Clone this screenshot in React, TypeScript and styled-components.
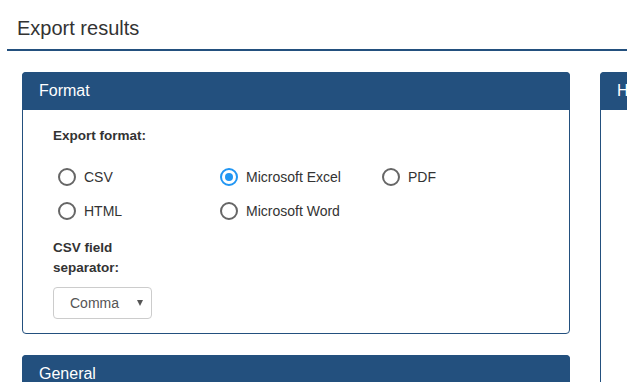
import React from "react";
import styled, { createGlobalStyle } from "styled-components";

const Global = createGlobalStyle`
  html, body { margin: 0; padding: 0; background: #fff; overflow: hidden; }
  body { font-family: "Liberation Sans", Arial, sans-serif; color: #333; width: 627px; height: 382px; }
`;

const Page = styled.div`
  width: 627px;
  height: 382px;
  overflow: hidden;
  padding-left: 7px;
  box-sizing: border-box;
`;

const TitleBar = styled.div`
  padding: 16px 0 0 10px;
  height: 33px;
  border-bottom: 2px solid #23507e;
`;

const Title = styled.h1`
  margin: 0;
  font-size: 20px;
  font-weight: normal;
  line-height: 24px;
  color: #333;
`;

const Columns = styled.div`
  display: grid;
  grid-template-columns: 548px 548px;
  column-gap: 30px;
  padding: 21px 0 0 15px;
`;

const Stack = styled.div`
  display: flex;
  flex-direction: column;
  gap: 21px;
`;

const Panel = styled.section<{ $tall?: boolean }>`
  border: 1px solid #23507e;
  border-radius: 4px;
  background: #fff;
  ${(p) => (p.$tall ? "height: 400px;" : "")}
`;

const PanelHeader = styled.div`
  background: #23507e;
  color: #fff;
  height: 38px;
  margin: -1px -1px 0 -1px;
  border-radius: 4px 4px 0 0;
  padding-left: 17px;
  display: flex;
  align-items: center;
  font-size: 16px;
`;

const PanelBody = styled.div`
  padding: 16px 30px 14px 30px;
`;

const FieldLabel = styled.div<{ $w?: number }>`
  font-weight: bold;
  font-size: 13.5px;
  line-height: 20px;
  color: #333;
  ${(p) => (p.$w ? `width: ${p.$w}px;` : "")}
`;

const RadioGrid = styled.div`
  display: grid;
  grid-template-columns: repeat(3, 162px);
  grid-auto-rows: 34px;
  margin-top: 14px;
  margin-bottom: 10px;
  padding-left: 5px;
`;

const RadioOption = styled.label`
  display: flex;
  align-items: center;
  gap: 8px;
  font-size: 14px;
  color: #333;
`;

const RadioCircle = styled.span<{ $checked?: boolean }>`
  width: 18px;
  height: 18px;
  box-sizing: border-box;
  border-radius: 50%;
  border: 2px solid ${(p) => (p.$checked ? "#2196f3" : "#666")};
  display: flex;
  align-items: center;
  justify-content: center;
  &::after {
    content: "";
    width: 8px;
    height: 8px;
    border-radius: 50%;
    background: ${(p) => (p.$checked ? "#2196f3" : "transparent")};
  }
`;

const Select = styled.div`
  margin-top: 9px;
  width: 99px;
  height: 32px;
  box-sizing: border-box;
  border: 1px solid #ccc;
  border-radius: 4px;
  display: flex;
  align-items: center;
  padding: 0 8px 0 16px;
  justify-content: space-between;
  font-size: 14px;
  color: #555;
`;

const Caret = styled.span`
  width: 0;
  height: 0;
  border-left: 3px solid transparent;
  border-right: 3px solid transparent;
  border-top: 6px solid #555;
`;

const options = [
  { label: "CSV", checked: false },
  { label: "Microsoft Excel", checked: true },
  { label: "PDF", checked: false },
  { label: "HTML", checked: false },
  { label: "Microsoft Word", checked: false },
];

export default function App() {
  return (
    <>
      <Global />
      <Page>
        <TitleBar>
          <Title>Export results</Title>
        </TitleBar>
        <Columns>
          <Stack>
            <Panel>
              <PanelHeader>Format</PanelHeader>
              <PanelBody>
                <FieldLabel>Export format:</FieldLabel>
                <RadioGrid>
                  {options.map((o) => (
                    <RadioOption key={o.label}>
                      <RadioCircle $checked={o.checked} />
                      {o.label}
                    </RadioOption>
                  ))}
                </RadioGrid>
                <FieldLabel $w={100}>CSV field separator:</FieldLabel>
                <Select>
                  Comma
                  <Caret />
                </Select>
              </PanelBody>
            </Panel>
            <Panel>
              <PanelHeader>General</PanelHeader>
            </Panel>
          </Stack>
          <Stack>
            <Panel $tall>
              <PanelHeader>Help</PanelHeader>
            </Panel>
          </Stack>
        </Columns>
      </Page>
    </>
  );
}
